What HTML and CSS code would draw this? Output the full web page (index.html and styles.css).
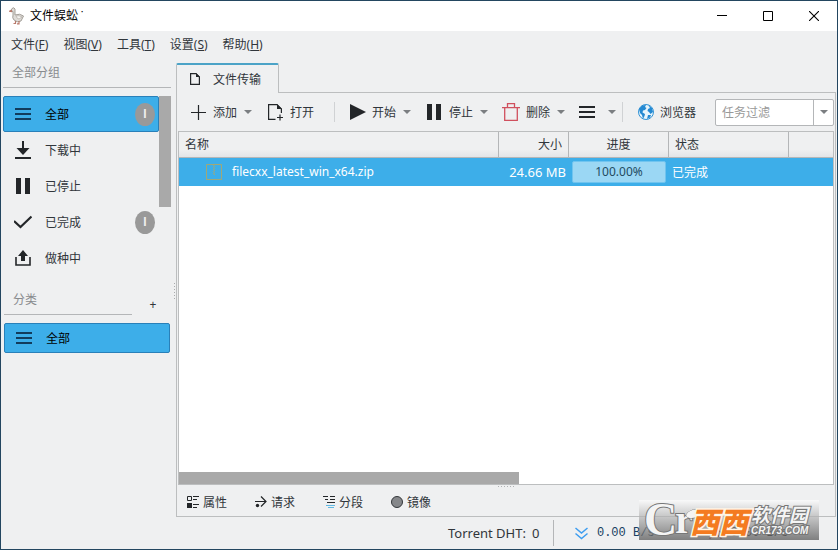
FILE: index.html
```
<!DOCTYPE html>
<html lang="zh-CN">
<head>
<meta charset="utf-8">
<title>文件蜈蚣</title>
<link rel="stylesheet" href="styles.css">
</head>
<body>
<div class="window">
  <header class="titlebar">
    <svg class="goose" width="16" height="18" viewBox="0 0 16 18"><path d="M3 1.5Q5-.2 6 2L6 8Q11 6 14.5 9L12 14Q8 16 5 13Q3 11 4 8L4 4.5L1.5 4Z" fill="#dfdcd8" stroke="#9b9690" stroke-width=".9"/><path d="M7 9Q10 8 13 10L10 12Q8 12 7 9" fill="#f4f2ef" stroke="#aaa49d" stroke-width=".6"/><path d="M3 3.2L.5 4.3L3 4.6M6.5 14V16.5H4.5M10 14V16.8H8" fill="none" stroke="#b9796a" stroke-width="1.2"/></svg>
    <h1 class="title">文件蜈蚣 ˙</h1>
    <div class="controls">
      <button aria-label="最小化"><svg width="10" height="10" viewBox="0 0 10 10"><path d="M0 4.5H10" stroke="#000"/></svg></button>
      <button aria-label="最大化"><svg width="10" height="10" viewBox="0 0 10 10"><path d="M.5 .5H9.5V9.5H.5Z" fill="none" stroke="#000"/></svg></button>
      <button aria-label="关闭"><svg width="10" height="10" viewBox="0 0 10 10"><path d="M0 0L10 10M10 0L0 10" stroke="#000" stroke-width="1.1"/></svg></button>
    </div>
  </header>
  <nav class="menubar">
    <button>文件(<u>F</u>)</button><button>视图(<u>V</u>)</button><button>工具(<u>T</u>)</button><button>设置(<u>S</u>)</button><button>帮助(<u>H</u>)</button>
  </nav>
  <div class="main">
    <aside class="sidebar">
      <h2 class="group-title">全部分组</h2>
      <div class="group-body">
        <div class="group-list">
          <button class="item selected"><svg width="16" height="16" viewBox="0 0 16 16"><path d="M0 3H16M0 8H16M0 13H16" stroke="#123c5c" stroke-width="2"/></svg><span>全部</span><b class="badge">I</b></button>
          <button class="item"><svg width="16" height="18" viewBox="0 0 16 18"><path d="M8 0V9" stroke="#232629" stroke-width="2"/><path d="M1.5 7H14.5L8 14Z" fill="#232629"/><path d="M0 17H16" stroke="#232629" stroke-width="2"/></svg><span>下载中</span></button>
          <button class="item"><svg width="16" height="16" viewBox="0 0 16 16"><path d="M1 0H6V16H1ZM10 0H15V16H10Z" fill="#232629"/></svg><span>已停止</span></button>
          <button class="item"><svg width="18" height="16" viewBox="0 0 18 16"><path d="M0 7L6.5 13L17.5 2.5" fill="none" stroke="#232629" stroke-width="2.2"/></svg><span>已完成</span><b class="badge">I</b></button>
          <button class="item"><svg width="16" height="16" viewBox="0 0 16 16"><path d="M1 7V15H15V7" fill="none" stroke="#232629" stroke-width="1.6"/><path d="M8 0L13 6H10V11H6V6H3Z" fill="#232629"/></svg><span>做种中</span></button>
        </div>
        <div class="vscroll"></div>
      </div>
      <div class="category-head"><h2 class="category-title">分类</h2><button class="plus" aria-label="添加分类">+</button></div>
      <button class="item selected category"><svg width="16" height="16" viewBox="0 0 16 16"><path d="M0 3H16M0 8H16M0 13H16" stroke="#123c5c" stroke-width="2"/></svg><span>全部</span></button>
    </aside>
    <div class="splitter"></div>
    <main class="content">
      <div class="tabs">
        <button class="tab"><svg width="10" height="12" viewBox="0 0 10 12"><path d="M.6 .6H6L9.4 4V11.4H.6Z" fill="none" stroke="#232629" stroke-width="1.2"/><path d="M6 0V4H10Z" fill="#232629"/></svg><span>文件传输</span></button>
        <div class="tab-rest"></div>
      </div>
      <div class="panel">
        <div class="toolbar">
          <button class="tool add"><svg width="16" height="16" viewBox="0 0 16 16"><path d="M0 8.5H15M7.5 1V16" stroke="#232629" stroke-width="1.2"/></svg><span>添加</span><i class="arrow"></i></button>
          <button class="tool open"><svg width="16" height="18" viewBox="0 0 16 18"><path d="M7.5 16.4H.6V1.6H9L13.4 6V10" fill="none" stroke="#232629" stroke-width="1.2"/><path d="M9 1V6H14Z" fill="#232629"/><path d="M9 14.5H15M12 11.5V17.5" stroke="#232629" stroke-width="1.2"/></svg><span>打开</span></button>
          <span class="sep"></span>
          <button class="tool start"><svg width="16" height="16" viewBox="0 0 16 16"><path d="M0 0L16 8L0 16Z" fill="#232629"/></svg><span>开始</span><i class="arrow"></i></button>
          <button class="tool pause"><svg width="16" height="16" viewBox="0 0 16 16"><path d="M0 0H5V16H0ZM9 0H14V16H9Z" fill="#232629"/></svg><span>停止</span><i class="arrow"></i></button>
          <button class="tool del"><svg width="18" height="18" viewBox="0 0 18 18"><path d="M0 4.6H18M5.5 4.5V.7H12.5V4.5M2.7 5V17.3H15.3V5" fill="none" stroke="#d0505e" stroke-width="1.3"/></svg><span>删除</span><i class="arrow"></i></button>
          <button class="tool more" aria-label="更多"><svg width="16" height="16" viewBox="0 0 16 16"><path d="M0 3H16M0 8H16M0 13H16" stroke="#232629" stroke-width="2"/></svg><i class="arrow"></i></button>
          <span class="sep second"></span>
          <button class="tool web"><svg width="16" height="16" viewBox="0 0 16 16"><circle cx="8" cy="8" r="7.5" fill="#e8f5fc" stroke="#3293d5"/><path d="M1 5L4 1.5L8 1L7 3L8.5 4L7 6L5 6.5L4.5 8.5L7 10L6.5 12L5 15L4 11L2 9ZM10 1L14 4L15 8L12.5 10L11 8L9.5 7L10 5L12 4ZM10 11L13 11L12 13.5L9 15Z" fill="#2489d2"/></svg><span>浏览器</span></button>
          <div class="filter"><input aria-label="任务过滤" placeholder="任务过滤"><button aria-label="展开过滤"><i class="arrow"></i></button></div>
        </div>
        <div class="table-box">
          <table>
            <colgroup><col class="c-name"><col class="c-size"><col class="c-progress"><col class="c-state"><col class="c-rest"></colgroup>
            <thead><tr><th>名称</th><th class="right">大小</th><th class="center">进度</th><th>状态</th><th></th></tr></thead>
            <tbody><tr><td><span class="file"><svg width="16" height="16" viewBox="0 0 16 16"><path d="M.5 .5H15.5V15.5H.5Z" fill="none" stroke="#9fa878"/><path d="M7.5 1V11M8.5 2V12" stroke="#9fa878" stroke-dasharray="1 1"/></svg>filecxx_latest_win_x64.zip</span></td><td class="right">24.66 MB</td><td class="bar-cell"><div class="bar">100.00%</div></td><td>已完成</td><td></td></tr></tbody>
          </table>
          <div class="hscroll"></div>
        </div>
        <div class="grip"></div>
        <div class="details">
          <button><svg width="12" height="12" viewBox="0 0 12 12"><path d="M.5 .5H4.5V4.5H.5Z" fill="none" stroke="#232629"/><path d="M0 7H5V12H0Z" fill="#232629"/><path d="M6 .5H12M6 3.5H10M6 8.5H12M6 11.5H10" stroke="#232629"/></svg><span>属性</span></button>
          <button><svg width="12" height="12" viewBox="0 0 12 12"><path d="M0 5.5H11M6 .5L11 5.5L6 10.5" fill="none" stroke="#232629" stroke-width="1.2"/><circle cx="2.5" cy="9.5" r="1.7" fill="#232629"/></svg><span>请求</span></button>
          <button><svg width="12" height="12" viewBox="0 0 12 12"><path d="M0 .5H5M7 .5H12M2 3.5H5M7 3.5H12M4 6.5H12" stroke="#232629"/><path d="M3 9.5H12M5 11.5H11" fill="none" stroke="#62b9e2"/></svg><span>分段</span></button>
          <button><svg width="12" height="12" viewBox="0 0 12 12"><circle cx="6" cy="6" r="5.5" fill="#85878a" stroke="#33363a"/></svg><span>镜像</span></button>
        </div>
      </div>
    </main>
  </div>
  <footer class="status">
    <span class="dht">Torrent DHT:</span><span class="count">0</span>
    <span class="speed"><svg width="13" height="13" viewBox="0 0 13 13"><path d="M.5 1L6.5 6L12.5 1M.5 6.5L6.5 11.5L12.5 6.5" fill="none" stroke="#3d9df0" stroke-width="1.5"/></svg>0.00 B/s</span>
    <span class="speed up"><svg width="13" height="13" viewBox="0 0 13 13"><path d="M.5 6L6.5 1L12.5 6M.5 11.5L6.5 6.5L12.5 11.5" fill="none" stroke="#b02020" stroke-width="1.3"/></svg>0.00 B/s</span>
  </footer>
  <div class="watermark">
    <span class="wm-c">C</span><span class="wm-r">r<svg class="leaf" width="18" height="12" viewBox="0 0 18 12"><path d="M1 7Q5 0 17 2Q14 11 5 10Q2 10 1 7" fill="#f4f4f4" stroke="#666"/></svg></span>
    <span class="wm-orange">西西</span>
    <span class="wm-right"><span class="wm-soft">软件园</span><span class="wm-url">CR173.COM</span></span>
  </div>
</div>
</body>
</html>
```
FILE: styles.css
```
* { box-sizing: border-box; }
body { margin: 0; }
body, button, input {
  font: 12px/18px "Noto Sans", "Noto Sans CJK SC", sans-serif;
  color: #31363b;
}
button { margin: 0; padding: 0; border: 0; background: none; text-align: left; white-space: nowrap; }
h1, h2 { margin: 0; font-size: 12px; font-weight: 400; }
svg { display: block; flex: none; }

.window {
  position: relative;
  display: flex;
  flex-direction: column;
  height: 100vh;
  border: 1px solid #234660;
  background: #eff0f1;
  overflow: hidden;
}
.titlebar { display: flex; align-items: center; flex: none; height: 30px; padding-left: 8px; background: #fff; }
.title { margin-left: 5px; color: #000; }
.controls { display: flex; margin-left: auto; }
.controls button { display: flex; align-items: center; justify-content: center; width: 46px; height: 30px; }
.menubar { display: flex; gap: 15px; flex: none; height: 28px; padding-left: 10px; align-items: center; }

.main { display: flex; flex: 1; min-height: 0; }
.sidebar { width: 170px; flex: none; padding-left: 2px; }
.group-title { height: 29px; padding: 5px 0 0 9px; border-bottom: 1px solid #b4b6b8; color: #888b8e; }
.group-body { display: flex; margin-top: 8px; }
.group-list { flex: 1; }
.item { display: flex; align-items: center; width: 100%; height: 36px; padding: 0 4px 0 11px; }
.item svg { width: 18px; }
.item span { margin-left: 13px; }
.item span, .tool span, .details span { padding-top: 2px; }
.selected { border: 1px solid #2980b9; border-radius: 2px; background: #3daee9; color: #000; padding: 0 3px 0 10px; }
.badge {
  width: 20px; height: 23px; margin-left: auto;
  border-radius: 50%; background: #999; color: #eee;
  font: 700 12px/23px "Liberation Sans", sans-serif; text-align: center;
}
.vscroll { width: 12px; height: 111px; background: #a9a9a9; }
.category-head { display: flex; height: 39px; margin: 0 0 8px 1px; }
.category-title { width: 128px; flex: none; padding: 15px 0 0 9px; border-bottom: 1px solid #b4b6b8; color: #888b8e; }
.plus { width: 42px; flex: none; padding-top: 18px; text-align: center; }
.category { width: auto; min-width: 166px; height: 30px; margin-left: 1px; }
.splitter {
  width: 5px; height: 17px; margin-top: 223px; flex: none;
  background: radial-gradient(circle, #a9abad 1px, transparent 1px) 2px 0 / 3px 3px repeat-y;
}

.content { display: flex; flex-direction: column; flex: 1; min-width: 0; padding: 4px 1px 0 0; }
.tabs { display: flex; flex: none; height: 30px; }
.tab {
  display: flex; align-items: center; gap: 13px; width: 103px; padding-left: 13px;
  border: solid #bcbebf; border-width: 2px 1px 0; border-top-color: #4ba3c7; border-radius: 2px 2px 0 0;
}
.tab span { padding-top: 2px; }
.tab-rest { flex: 1; border-bottom: 1px solid #bcbebf; }
.panel { display: flex; flex-direction: column; flex: 1; min-height: 0; border: solid #bcbebf; border-width: 0 1px 1px; padding: 0 1px; }

.toolbar { display: flex; align-items: center; flex: none; height: 38px; padding-left: 13px; }
.tool { display: flex; align-items: center; gap: 6px; margin-right: 16px; flex: none; }
.arrow { flex: none; border: solid transparent; border-width: 4px 4px 0; border-top-color: #7b7e81; margin-left: 1px; }
.sep { width: 1px; height: 20px; margin-right: 15px; margin-left: 4px; background: #d0d2d4; }
.second { margin-left: -10px; }
.del { margin-left: -2px; }
.more { gap: 12px; margin-left: -2px; }
.filter { display: flex; flex: 1; min-width: 60px; height: 27px; margin-left: 3px; border: 1px solid #b4b6b8; border-radius: 2px; background: #fff; }
.filter input { flex: 1; min-width: 0; border: 0; padding: 2px 6px 0; background: none; outline: 0; }
.filter input::placeholder { color: #999; opacity: 1; }
.filter button { display: flex; align-items: center; justify-content: center; width: 20px; border-left: 1px solid #b4b6b8; }

.table-box { display: flex; flex-direction: column; flex: 1; min-height: 0; border: 1px solid #bcbebf; background: #fff; }
table { width: 100%; table-layout: fixed; border-collapse: separate; border-spacing: 0; }
.c-name { width: 320px; }
.c-size { width: 70px; }
.c-progress { width: 100px; }
.c-state { width: 120px; }
th { height: 26px; padding: 0 6px; border: solid #b4b6b8; border-width: 0 1px 1px 0; background: linear-gradient(#eff0f1 70%, #e3e5e7); font-weight: 400; text-align: left; }
th:last-child { border-right: 0; }
td { height: 28px; padding: 0 3px; background: #3daee9; color: #fff; }
td:nth-child(4) { padding-top: 2px; }
th.right, td.right { text-align: right; }
td.right { font-size: 13px; }
th.center { text-align: center; }
.file { display: flex; align-items: center; gap: 10px; padding-left: 24px; }
.bar { height: 22px; border: 1px solid #70c4ef; border-radius: 2px; background: #9bd7f4; color: #234b62; line-height: 20px; text-align: center; }
.hscroll { width: 52%; height: 12px; margin-top: auto; background: #a9a9a9; }
.grip { flex: none; width: 17px; height: 3px; margin: 0 auto; background: linear-gradient(90deg, #b0b2b4 1px, transparent 1px) 0 1px / 3px 1px repeat-x; }
.details { display: flex; flex: none; height: 28px; gap: 28px; padding-left: 9px; align-items: center; }
.details button { display: flex; align-items: center; gap: 4px; }

.status { display: flex; align-items: center; flex: none; height: 32px; padding-left: 447px; font-size: 13px; }
.dht { white-space: nowrap; }
.count { width: 22px; height: 26px; margin-left: 6px; border-right: 1px solid #b4b6b8; line-height: 26px; }
.speed { display: flex; gap: 9px; align-items: center; margin-left: 21px; color: #173f61; font: 12px/18px "Liberation Mono", monospace; white-space: nowrap; }
.up { margin-left: 54px; color: #222; }

.watermark {
  position: absolute; right: 18px; bottom: 9px;
  display: flex; align-items: center; width: 180px; height: 40px; padding-left: 5px;
  background: linear-gradient(rgba(255, 255, 255, .6), rgba(90, 90, 90, .75));
  color: #f4f4f4; white-space: nowrap;
}
.wm-c, .wm-r { font: 700 46px/40px "Liberation Serif", serif; -webkit-text-stroke: 2px #777; paint-order: stroke fill; }
.wm-c { width: 31px; }
.wm-r { position: relative; width: 14px; font-size: 40px; }
.leaf { position: absolute; left: 10px; top: 8px; }
.wm-orange {
  position: relative; margin-left: 1px;
  color: #f47b20; font: italic 900 29px/36px "Noto Sans CJK SC", sans-serif;
  -webkit-text-stroke: 3px #fff4e4; paint-order: stroke fill;
}
.wm-right { display: flex; flex-direction: column; margin-left: 3px; }
.wm-soft { font: italic 700 19px/22px "Noto Sans CJK SC", sans-serif; -webkit-text-stroke: 2px #777; paint-order: stroke fill; }
.wm-url { font: italic 700 10px/12px "Liberation Sans", sans-serif; -webkit-text-stroke: 2px #777; paint-order: stroke fill; }
```
